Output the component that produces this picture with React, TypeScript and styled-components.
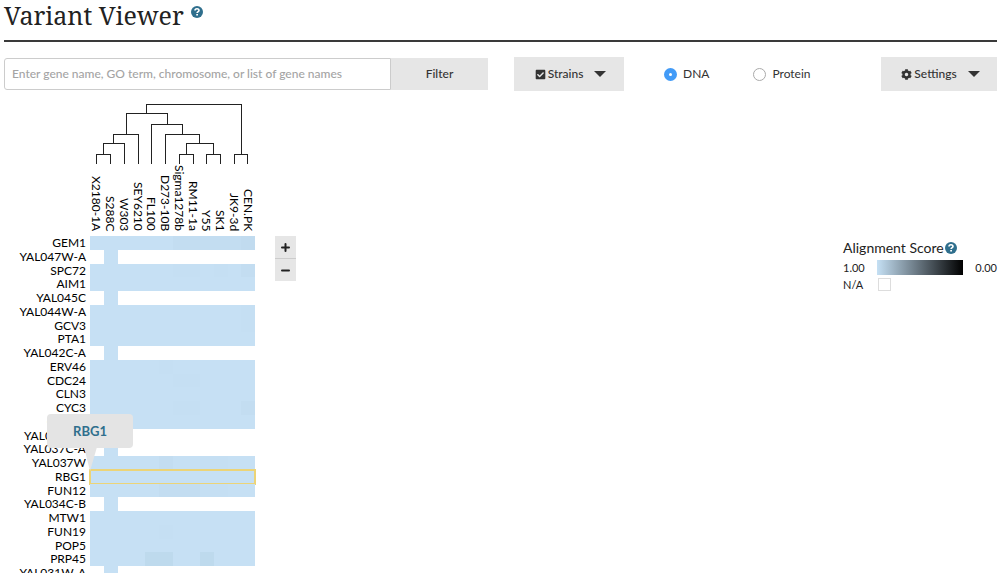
import React, { useState } from "react";
import styled, { createGlobalStyle } from "styled-components";
import { FaCheckSquare, FaCog } from "react-icons/fa";

const GlobalStyle = createGlobalStyle`
  *, *::before, *::after { box-sizing: border-box; }
  body {
    margin: 0;
    background: #fff;
    color: #333;
    font-family: Lato, "Open Sans", sans-serif;
    font-size: 12px;
    line-height: 16px;
  }
  button, input { font: inherit; color: inherit; }
`;

const Page = styled.div`
  height: 100vh;
  overflow: hidden;
  padding: 0 10px 0 4px;
`;

const Header = styled.header`
  display: flex;
  gap: 7px;
  height: 42px;
  border-bottom: 2px solid #3a3a3a;
`;

const Title = styled.h1`
  margin: 0;
  color: #222;
  font-family: "Noto Serif", "Droid Serif", "DejaVu Serif Condensed", "DejaVu Serif", serif;
  font-size: 25px;
  font-weight: 400;
  line-height: 30px;
`;

const HelpLink = styled.a<{ $top: number }>`
  display: flex;
  align-self: flex-start;
  margin-top: ${(p) => p.$top}px;
  color: #2f6f8d;
`;

const Toolbar = styled.div`
  display: flex;
  align-items: flex-start;
  margin-top: 15px;
`;

const SearchForm = styled.form`
  display: flex;
  flex: 0 1 484px;
  height: 32px;
  margin: 1px 26px 0 0;
`;

const SearchInput = styled.input`
  flex: 1;
  min-width: 0;
  padding: 0 7px;
  border: 1px solid #ccc;
  border-radius: 3px 0 0 3px;
  background: #fff;
  font-size: 12px;
  font-weight: 500;
  &::placeholder { color: #a4a4a4; opacity: 1; }
`;

const Button = styled.button<{ $width: number }>`
  display: flex;
  flex: none;
  align-items: center;
  justify-content: center;
  width: ${(p) => p.$width}px;
  height: 100%;
  padding: 0;
  border: 0;
  background: #e6e6e6;
  font-size: 12px;
  font-weight: 500;
`;

const MenuButton = styled(Button)`
  gap: 2px;
  height: 34px;
  padding-left: 3px;
  svg { font-size: 11px; }
`;

const Caret = styled.span`
  margin-left: 9px;
  border: 6px solid transparent;
  border-top-color: #333;
  border-bottom: 0;
`;

const RadioGroup = styled.fieldset`
  display: flex;
  flex: 1;
  gap: 44px;
  height: 34px;
  margin: 0;
  padding: 0 0 0 40px;
  border: 0;
`;

const RadioLabel = styled.label`
  display: flex;
  align-items: center;
  gap: 6px;
`;

const Radio = styled.input`
  appearance: none;
  width: 13px;
  height: 13px;
  margin: 0;
  border: 1px solid #aaa;
  border-radius: 50%;
  background: #fff;
  &:checked { border: 5px solid #429bf7; }
`;

const Content = styled.main`
  display: flex;
  align-items: flex-start;
  padding-top: 11px;
`;

const Chart = styled.section`
  display: grid;
  grid-template-columns: 82px 165px;
  column-gap: 4px;
`;

const Tree = styled.svg`
  grid-column: 2;
  display: block;
  width: 165px;
  height: 62px;
  fill: none;
  stroke: #222;
  shape-rendering: crispEdges;
`;

const StrainLabels = styled.div`
  grid-column: 2;
  display: grid;
  grid-template-columns: repeat(12, minmax(0, 1fr));
  height: 72px;
  padding-bottom: 5px;
`;

const StrainLabel = styled.span`
  display: flex;
  align-items: center;
  justify-content: flex-end;
  writing-mode: vertical-rl;
  color: #000;
  font-size: 12px;
  line-height: 13px;
  white-space: nowrap;
`;

const GeneLabels = styled.div`
  display: grid;
  grid-template-rows: repeat(25, minmax(0, 1fr));
  height: 344px;
  color: #000;
  text-align: right;
  line-height: 14px;
`;

const GeneLabel = styled.span`
  white-space: nowrap;
`;

const Heatmap = styled.div`
  display: grid;
  grid-template-rows: repeat(25, minmax(0, 1fr));
  height: 344px;
  position: relative;
`;

const GeneRow = styled.div<{ $selected: boolean }>`
  display: grid;
  grid-template-columns: repeat(12, minmax(0, 1fr));
  outline: ${(p) => (p.$selected ? "2px solid #ecd477" : "none")};
  outline-offset: -1px;
`;

const Cell = styled.div<{ $color: string }>`
  background: ${(p) => p.$color};
`;

const Tooltip = styled.div`
  position: absolute;
  z-index: 1;
  left: -43px;
  top: 178px;
  width: 86px;
  height: 34px;
  border-radius: 4px;
  background: #e4e4e4;
  text-align: center;
  line-height: 35px;
`;

const TooltipTail = styled.svg`
  position: absolute;
  left: 37px;
  top: 33px;
  display: block;
  width: 18px;
  height: 24px;
  fill: #e4e4e4;
`;

const GeneLink = styled.a`
  color: #2f6f8d;
  font-size: 13px;
  font-weight: 700;
  text-decoration: none;
`;

const ZoomControls = styled.div`
  display: grid;
  grid-template-rows: 22px 22px;
  gap: 1px;
  width: 21px;
  margin: 134px 0 0 20px;
  background: #ccc;
`;

const ZoomButton = styled.button`
  display: flex;
  align-items: center;
  justify-content: center;
  padding: 0;
  border: 0;
  background: #e6e6e6;
`;

const Legend = styled.aside`
  width: 154px;
  margin: 138px 0 0 auto;
  color: #222;
`;

const LegendTitle = styled.h2`
  display: flex;
  align-items: center;
  gap: 1px;
  margin: 0;
  font-size: 14px;
  font-weight: 400;
  line-height: 16px;
`;

const LegendRow = styled.div`
  display: grid;
  grid-template-columns: 34px 86px 1fr;
  align-items: center;
  height: 17px;
  font-size: 11px;
`;

const LegendRows = styled.div`
  padding-top: 3px;
`;

const Gradient = styled.div`
  height: 15px;
  background: linear-gradient(to right, #c5e0f4, #000);
`;

const MaxLabel = styled.span`
  text-align: right;
`;

const Swatch = styled.span`
  width: 13px;
  height: 13px;
  margin-left: 1px;
  border: 1px solid #ddd;
`;

const HelpIcon = () => (
  <svg width="12" height="12" viewBox="0 0 12 12" fill="none" aria-hidden="true">
    <circle cx="6" cy="6" r="6" fill="currentColor" />
    <path d="M4 4.6C4 3.4 4.9 2.7 6 2.7S8 3.4 8 4.4C8 5.6 6.1 5.7 6.1 7.1" stroke="#fff" strokeWidth="1.6" />
    <path d="M5.2 8H7V9.6H5.2Z" fill="#fff" />
  </svg>
);

const SignIcon = ({ plus }: { plus?: boolean }) => (
  <svg width="9" height="9" viewBox="0 0 9 9" fill="none" stroke="#222" strokeWidth="2" strokeLinecap="round" aria-hidden="true">
    <path d={plus ? "M1 4.5H8M4.5 1V8" : "M1 4.5H8"} />
  </svg>
);

const strains = [
  "X2180-1A", "S288C", "W303", "SEY6210", "FL100", "D273-10B",
  "Sigma1278b", "RM11-1a", "Y55", "SK1", "JK9-3d", "CEN.PK",
];

type Gene = { name: string; referenceOnly?: boolean; shades?: Record<number, string> };

const BASE = "#c6e0f4";
const FAINT = "#c5dff3";
const SHADE = "#c3ddf1";
const DARK = "#bedaed";

const genes: Gene[] = [
  { name: "GEM1", shades: { 6: SHADE, 7: SHADE, 8: SHADE, 9: SHADE, 10: SHADE, 11: "#c1dbef" } },
  { name: "YAL047W-A", referenceOnly: true },
  { name: "SPC72", shades: { 6: FAINT, 7: FAINT, 9: FAINT, 11: SHADE } },
  { name: "AIM1" },
  { name: "YAL045C", referenceOnly: true },
  { name: "YAL044W-A", shades: { 11: FAINT } },
  { name: "GCV3", shades: { 11: FAINT } },
  { name: "PTA1" },
  { name: "YAL042C-A", referenceOnly: true },
  { name: "ERV46", shades: { 5: FAINT } },
  { name: "CDC24", shades: { 6: FAINT, 7: FAINT } },
  { name: "CLN3" },
  { name: "CYC3", shades: { 6: FAINT, 7: FAINT, 11: SHADE } },
  { name: "CDC19" },
  { name: "YAL037C-B", referenceOnly: true },
  { name: "YAL037C-A", referenceOnly: true },
  { name: "YAL037W", shades: { 5: SHADE, 8: FAINT, 9: FAINT } },
  { name: "RBG1" },
  { name: "FUN12", shades: { 5: SHADE, 6: SHADE, 7: SHADE, 8: FAINT, 9: FAINT } },
  { name: "YAL034C-B", referenceOnly: true },
  { name: "MTW1" },
  { name: "FUN19", shades: { 5: FAINT } },
  { name: "POP5" },
  { name: "PRP45", shades: { 4: DARK, 5: DARK, 8: DARK } },
  { name: "YAL031W-A", referenceOnly: true },
];

const treePath = [
  "M6.5 62V52.5H20.5V62",
  "M13.5 52.5V41.5H34.5V62",
  "M23.5 41.5V32.5H48.5V62",
  "M36.5 32.5V11.5H77.5V22.5",
  "M61.5 62V22.5H92.5V32.5",
  "M75.5 62V32.5H109.5V41.5",
  "M96.5 52.5V41.5H123.5V52.5",
  "M89.5 62V52.5H103.5V62",
  "M116.5 62V52.5H130.5V62",
  "M56.5 11.5V2.5H151.5V52.5",
  "M144.5 62V52.5H157.5V62",
].join("");

export default function App() {
  const [kind, setKind] = useState("dna");
  const selected = "RBG1";

  return (
    <>
      <GlobalStyle />
      <Page>
        <Header>
          <Title>Variant Viewer</Title>
          <HelpLink href="#help" aria-label="Help" $top={6}><HelpIcon /></HelpLink>
        </Header>

        <Toolbar>
          <SearchForm onSubmit={(e) => e.preventDefault()}>
            <SearchInput
              type="text"
              aria-label="Search genes"
              placeholder="Enter gene name, GO term, chromosome, or list of gene names"
            />
            <Button type="submit" $width={97}>Filter</Button>
          </SearchForm>
          <MenuButton type="button" $width={110}><FaCheckSquare />Strains<Caret /></MenuButton>
          <RadioGroup aria-label="Sequence type">
            <RadioLabel>
              <Radio type="radio" name="kind" checked={kind === "dna"} onChange={() => setKind("dna")} />
              DNA
            </RadioLabel>
            <RadioLabel>
              <Radio type="radio" name="kind" checked={kind === "protein"} onChange={() => setKind("protein")} />
              Protein
            </RadioLabel>
          </RadioGroup>
          <MenuButton type="button" $width={116}><FaCog />Settings<Caret /></MenuButton>
        </Toolbar>

        <Content>
          <Chart aria-label="Variants by gene and strain">
            <Tree viewBox="0 0 165 62" aria-hidden="true"><path d={treePath} /></Tree>
            <StrainLabels>
              {strains.map((s) => <StrainLabel key={s}>{s}</StrainLabel>)}
            </StrainLabels>
            <GeneLabels>
              {genes.map((g) => <GeneLabel key={g.name}>{g.name}</GeneLabel>)}
            </GeneLabels>
            <Heatmap>
              {genes.map((g) => (
                <GeneRow key={g.name} $selected={g.name === selected}>
                  {strains.map((s, i) => (
                    <Cell
                      key={s}
                      $color={g.referenceOnly && i !== 1 ? "transparent" : g.shades?.[i] ?? BASE}
                    />
                  ))}
                </GeneRow>
              ))}
              <Tooltip role="tooltip">
                <GeneLink href="#rbg1">{selected}</GeneLink>
                <TooltipTail viewBox="0 0 18 24" aria-hidden="true"><path d="M0 0H13L6 24Z" /></TooltipTail>
              </Tooltip>
            </Heatmap>
          </Chart>

          <ZoomControls>
            <ZoomButton type="button" aria-label="Zoom in"><SignIcon plus /></ZoomButton>
            <ZoomButton type="button" aria-label="Zoom out"><SignIcon /></ZoomButton>
          </ZoomControls>

          <Legend>
            <LegendTitle>
              Alignment Score
              <HelpLink href="#score-help" aria-label="About alignment score" $top={2}><HelpIcon /></HelpLink>
            </LegendTitle>
            <LegendRows>
              <LegendRow><span>1.00</span><Gradient /><MaxLabel>0.00</MaxLabel></LegendRow>
              <LegendRow><span>N/A</span><Swatch /></LegendRow>
            </LegendRows>
          </Legend>
        </Content>
      </Page>
    </>
  );
}
